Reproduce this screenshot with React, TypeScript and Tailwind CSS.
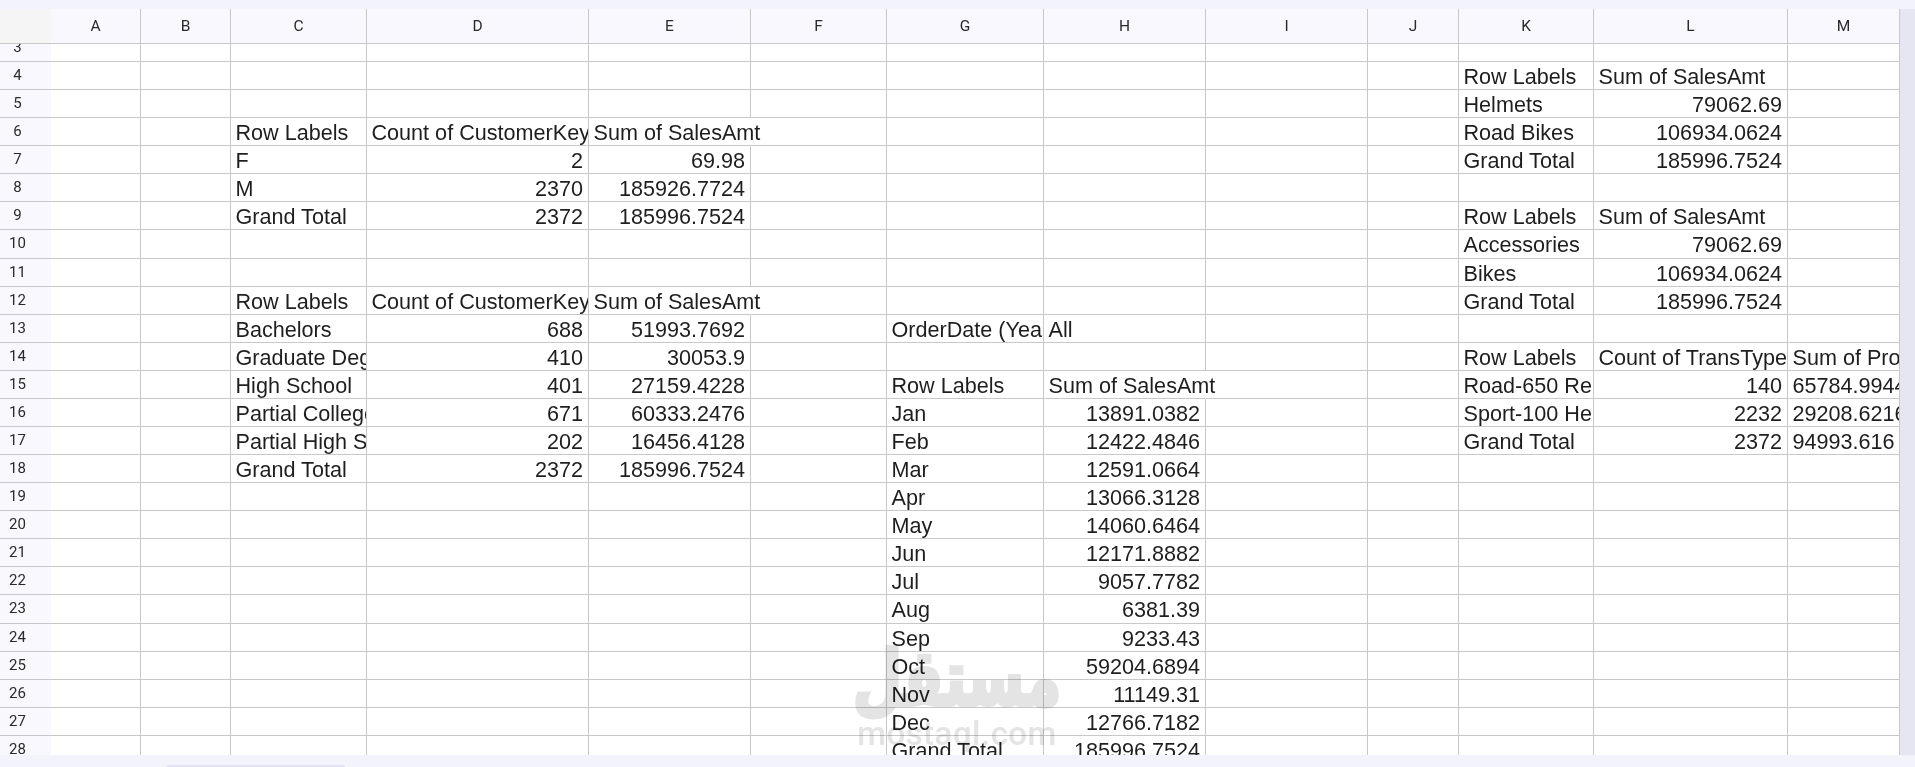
const columns = ["A", "B", "C", "D", "E", "F", "G", "H", "I", "J", "K", "L", "M"];
const gridCols =
  "grid grid-cols-[51px_90px_90px_136px_222px_162px_136px_157px_162px_162px_91px_135px_194px_112px]";

type Value = string | number;

// only the filled cells, by row number then column
const sheet: Record<number, Record<string, Value>> = {
  4: { K: "Row Labels", L: "Sum of SalesAmt" },
  5: { K: "Helmets", L: 79062.69 },
  6: { C: "Row Labels", D: "Count of CustomerKey", E: "Sum of SalesAmt", K: "Road Bikes", L: 106934.0624 },
  7: { C: "F", D: 2, E: 69.98, K: "Grand Total", L: 185996.7524 },
  8: { C: "M", D: 2370, E: 185926.7724 },
  9: { C: "Grand Total", D: 2372, E: 185996.7524, K: "Row Labels", L: "Sum of SalesAmt" },
  10: { K: "Accessories", L: 79062.69 },
  11: { K: "Bikes", L: 106934.0624 },
  12: { C: "Row Labels", D: "Count of CustomerKey", E: "Sum of SalesAmt", K: "Grand Total", L: 185996.7524 },
  13: { C: "Bachelors", D: 688, E: 51993.7692, G: "OrderDate (Year)", H: "All" },
  14: { C: "Graduate Degree", D: 410, E: 30053.9, K: "Row Labels", L: "Count of TransType", M: "Sum of ProductCost" },
  15: { C: "High School", D: 401, E: 27159.4228, G: "Row Labels", H: "Sum of SalesAmt", K: "Road-650 Red, 44", L: 140, M: "65784.9944" },
  16: { C: "Partial College", D: 671, E: 60333.2476, G: "Jan", H: 13891.0382, K: "Sport-100 Helmet", L: 2232, M: "29208.6216" },
  17: { C: "Partial High School", D: 202, E: 16456.4128, G: "Feb", H: 12422.4846, K: "Grand Total", L: 2372, M: "94993.616" },
  18: { C: "Grand Total", D: 2372, E: 185996.7524, G: "Mar", H: 12591.0664 },
  19: { G: "Apr", H: 13066.3128 },
  20: { G: "May", H: 14060.6464 },
  21: { G: "Jun", H: 12171.8882 },
  22: { G: "Jul", H: 9057.7782 },
  23: { G: "Aug", H: 6381.39 },
  24: { G: "Sep", H: 9233.43 },
  25: { G: "Oct", H: 59204.6894 },
  26: { G: "Nov", H: 11149.31 },
  27: { G: "Dec", H: 12766.7182 },
  28: { G: "Grand Total", H: 185996.7524 },
};

// text that runs on over the empty cell beside it and hides the grid line
const spills = ["6E", "12E", "15H"];

function Cell({ row, col }: { row: number; col: string }) {
  const value = sheet[row]?.[col];
  if (value === undefined) {
    return <div className="border-r border-b border-[#c8c8c8]" />;
  }
  if (spills.includes(row + col)) {
    return (
      <div className="border-b border-r border-b-[#c8c8c8] border-r-transparent pl-[4.5px] whitespace-nowrap">
        {value}
      </div>
    );
  }
  const align = typeof value === "number" ? "text-right" : "text-left";
  return (
    <div className={`overflow-hidden border-r border-b border-[#c8c8c8] pr-[5px] pl-[4.5px] whitespace-nowrap ${align}`}>
      {value}
    </div>
  );
}

function Row({ row }: { row: number }) {
  return (
    <div className={`${gridCols} grid-rows-[28.08px] leading-[30px]`}>
      <div className="border-b border-[#c8c8c8] bg-[#f8f8fe]">
        <div className="w-[35px] text-center font-['Roboto',sans-serif] text-[15px] leading-[26px] text-[#2a2a2a]">
          {row}
        </div>
      </div>
      {columns.map((col) => (
        <Cell key={col} row={row} col={col} />
      ))}
    </div>
  );
}

export default function App() {
  const rows = Array.from({ length: 26 }, (_, i) => i + 3);

  return (
    <div className="flex h-[767px] w-full flex-col overflow-hidden bg-[#f3f3fc] font-['Liberation_Sans',Arial,sans-serif] text-[21.6px] text-[#1e1e1e]">
      <div className="h-[9px] shrink-0" />
      <div className="flex h-[746px] shrink-0">
        <div className="flex w-[1900px] flex-col bg-white">
          <div className={`${gridCols} h-[35px] shrink-0 font-['Roboto',sans-serif] text-[15.5px] leading-[34px] text-[#2a2a2a]`}>
            <div className="border-b border-[#c8c8c8] bg-[#f5f5f5]" />
            {columns.map((col) => (
              <div key={col} className="border-r border-b border-[#c8c8c8] bg-[#f8f8fe] text-center">
                {col}
              </div>
            ))}
          </div>
          <div className="relative min-h-0 flex-1 overflow-hidden">
            <div className="-mt-[10.08px]">
              {rows.map((row) => (
                <Row key={row} row={row} />
              ))}
            </div>
            {/* site watermark */}
            <div className="pointer-events-none absolute top-[614px] left-[857px] flex w-[200px] flex-col items-center text-[#e4e4e4] mix-blend-multiply">
              <div
                dir="rtl"
                className="origin-bottom scale-y-[1.35] font-['DejaVu_Sans',sans-serif] text-[57px] leading-[60px] font-bold [-webkit-text-stroke:3px_#e4e4e4]"
              >
                مستقل
              </div>
              <div className="font-['Roboto',sans-serif] text-[33px] leading-[32px] font-medium tracking-[0.5px]">
                mostaql.com
              </div>
            </div>
          </div>
        </div>
        <div className="w-[15px] bg-[#e6e6f2]" />
      </div>
      <div className="flex h-[12px] shrink-0 items-end pl-[166px]">
        <div className="h-[2px] w-[179px] rounded-t-sm bg-[#e2e2f0]" />
      </div>
    </div>
  );
}
